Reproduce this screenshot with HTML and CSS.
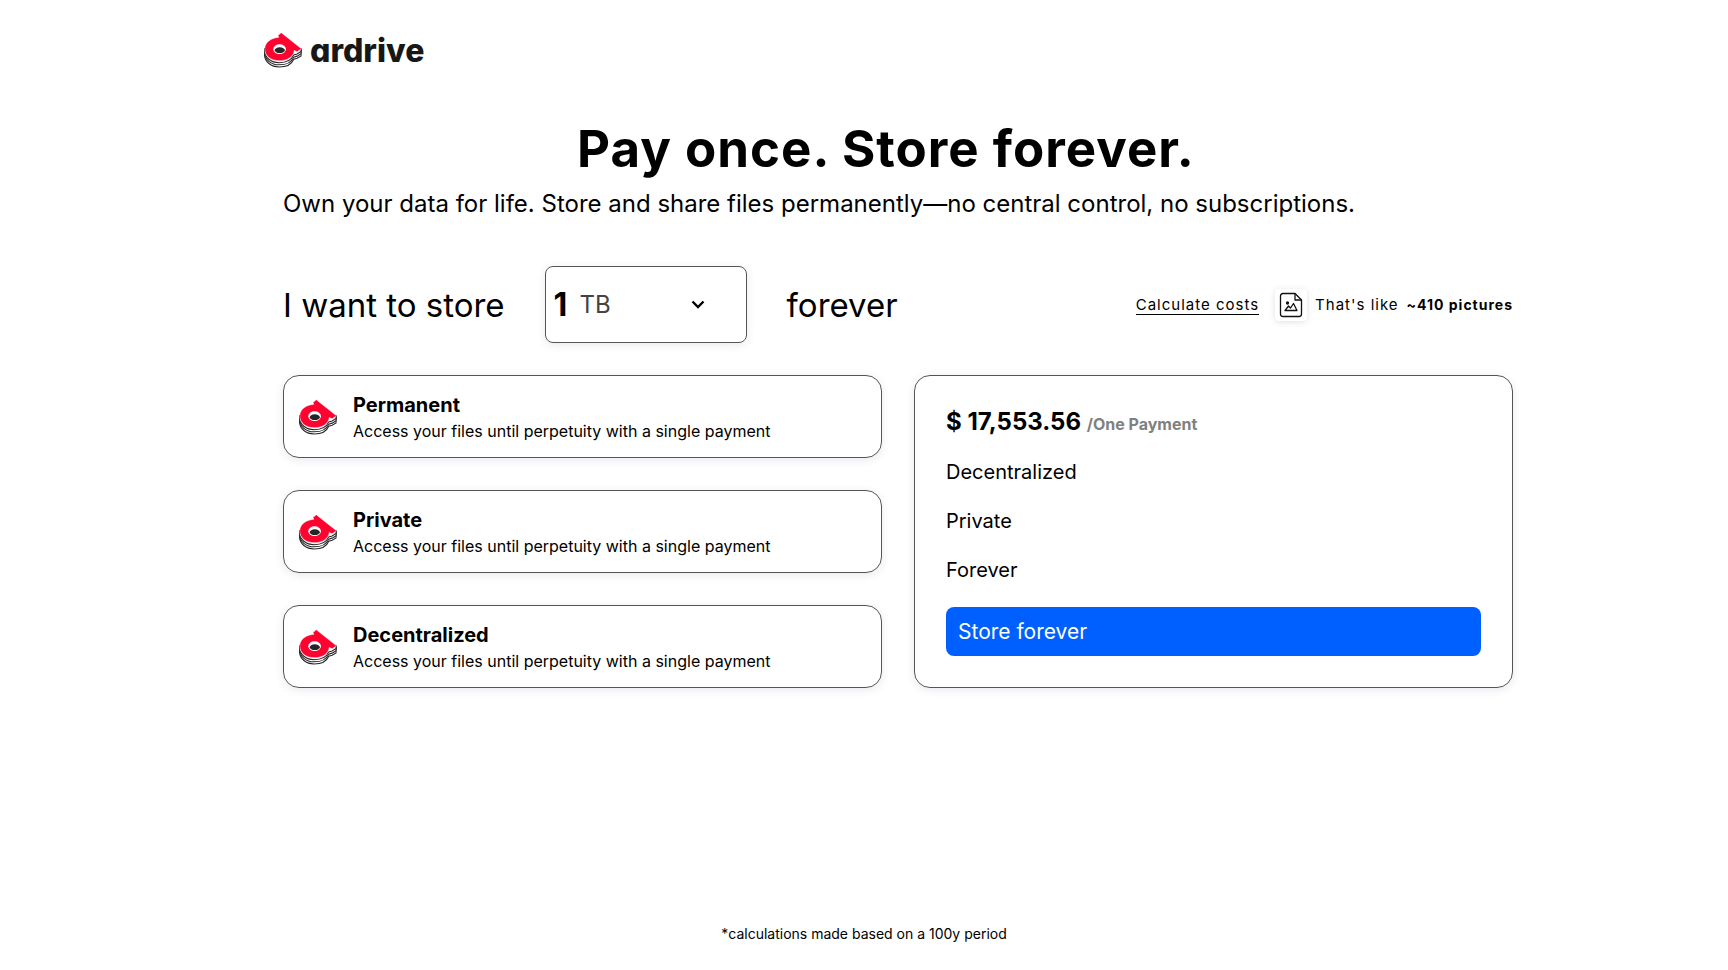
FILE: index.html
```html
<!DOCTYPE html>
<html lang="en">
<head>
    <meta charset="UTF-8">
    <meta name="viewport" content="width=device-width, initial-scale=1.0">
    <title>ArDrive Pricing</title>
    <link rel="stylesheet" href="styles.css">
</head>
<body>
    <svg class="sprite" aria-hidden="true">
        <symbol id="mark" viewBox="0 0 39 36">
            <g fill="#fff" stroke="#262626" stroke-width="1.100">
                <path d="M0.500 22C0.500 30.500 7.500 35.400 15.500 35.400C22.500 35.400 28.500 32.500 30.500 27.500L34 26.500L38 24V17H0.500Z"/>
                <path d="M0.500 20C0.500 28 7.500 33.200 15.500 33.200C22.500 33.200 28.500 30.300 30.500 25.300L34 24.300L38 21.800V17H0.500Z"/>
                <path d="M0.500 18C0.500 26 7.500 31 15.500 31C22.500 31 28.500 28 30.500 23L34 22L38 19.500V17H0.500Z"/>
            </g>
            <path fill="#fe0230" stroke="#fff" stroke-width="0.500" d="M15.200 5L14.300 3.200L17.700 0.200L38.500 16.800L34 19.800L31 18.400C30.500 24.600 24 29 16 29C7 29 0.800 24.300 0.800 16.700C0.800 10.500 7 5.600 15.200 5Z"/>
            <ellipse cx="16" cy="17.200" rx="6.500" ry="5" fill="#fff"/>
            <ellipse cx="16.200" cy="18.200" rx="5.200" ry="3" fill="#262626"/>
        </symbol>
    </svg>

    <header class="header">
        <a href="#" class="logo">
            <svg class="mark"><use href="#mark"/></svg>
            <span>ardrive</span>
        </a>
    </header>

    <main class="container">
        <h1>Pay once. Store forever.</h1>
        <p class="subtitle">Own your data for life. Store and share files permanently—no central control, no subscriptions.</p>

        <div class="calculator">
            <label for="amount">I want to store</label>
            <div class="size-box">
                <input type="text" id="amount" name="amount" value="1">
                <select id="unit" name="unit" aria-label="Unit">
                    <option>MB</option>
                    <option>GB</option>
                    <option selected>TB</option>
                </select>
                <svg class="chevron" viewBox="0 0 14 9"><path d="M1.500 1.500L7 7L12.500 1.500" fill="none" stroke="#000" stroke-width="2.400"/></svg>
            </div>
            <span>forever</span>
            <div class="costs">
                <a href="#">Calculate costs</a>
                <span class="file-icon">
                    <svg viewBox="0 0 24 26" fill="none" stroke="#111" stroke-width="1.300" stroke-linejoin="round">
                        <path d="M16 1.500H4Q1.500 1.500 1.500 4V22Q1.500 24.500 4 24.500H20Q22.500 24.500 22.500 22V8Z"/>
                        <path d="M16 1.500V8H22.500"/>
                        <path d="M6 18.500L9.500 14L11.500 16L14.500 11.500L18 18.500Z"/>
                        <circle cx="8.500" cy="11" r="1" fill="#111"/>
                    </svg>
                </span>
                <span>That's like</span>
                <strong>~410 pictures</strong>
            </div>
        </div>

        <div class="content">
            <div class="features">
                <div class="card feature">
                    <svg class="mark"><use href="#mark"/></svg>
                    <div>
                        <h2>Permanent</h2>
                        <p>Access your files until perpetuity with a single payment</p>
                    </div>
                </div>
                <div class="card feature">
                    <svg class="mark"><use href="#mark"/></svg>
                    <div>
                        <h2>Private</h2>
                        <p>Access your files until perpetuity with a single payment</p>
                    </div>
                </div>
                <div class="card feature">
                    <svg class="mark"><use href="#mark"/></svg>
                    <div>
                        <h2>Decentralized</h2>
                        <p>Access your files until perpetuity with a single payment</p>
                    </div>
                </div>
            </div>
            <div class="card price-card">
                <p class="price">$ 17,553.56 <span>/One Payment</span></p>
                <p>Decentralized</p>
                <p>Private</p>
                <p>Forever</p>
                <button type="button">Store forever</button>
            </div>
        </div>
    </main>

    <footer class="footer">*calculations made based on a 100y period</footer>
</body>
</html>
```
FILE: styles.css
```css
* {
    box-sizing: border-box;
}
body {
    font-family: Inter, sans-serif;
    background-color: #fff;
    color: #000;
    margin: 0;
    min-height: 100vh;
    display: flex;
    flex-direction: column;
}
h1, h2, p {
    margin: 0;
}
.sprite {
    display: none;
}
.mark {
    width: 38px;
    height: 36px;
    flex: none;
}
.header {
    width: 100%;
    max-width: 1200px;
    margin: 0 auto;
    padding: 32px 0;
}
.logo {
    display: inline-flex;
    align-items: center;
    gap: 8px;
    height: 36px;
    color: #171717;
    text-decoration: none;
    font-size: 32px;
    font-weight: 800;
    font-feature-settings: "cv11", "ss03";
}
.container {
    width: 100%;
    max-width: 1298px;
    margin: 0 auto;
    padding: 13px 0 0 68px;
}
h1 {
    font-size: 51px;
    line-height: 64px;
    letter-spacing: 1px;
    text-align: center;
    padding-right: 24px;
}
.subtitle {
    font-size: 24px;
    line-height: 32px;
    margin: 7px 0 46px;
}
.calculator {
    display: flex;
    align-items: center;
    gap: 40px;
    font-size: 33px;
}
.size-box {
    display: flex;
    align-items: center;
    position: relative;
    width: 202px;
    height: 77px;
    padding: 0 8px;
    border: 1px solid #555;
    border-radius: 8px;
    box-shadow: 0 2px 8px rgba(60, 70, 110, 0.12);
}
.size-box input {
    width: 26px;
    padding: 0;
    border: none;
    background: none;
    font: 700 32px Inter, sans-serif;
}
.size-box select {
    flex: 1;
    min-width: 0;
    padding: 0;
    border: none;
    background: none;
    appearance: none;
    color: #444;
    font: 400 24px Inter, sans-serif;
}
.chevron {
    position: absolute;
    right: 41px;
    width: 14px;
    height: 9px;
    pointer-events: none;
}
.costs {
    display: flex;
    align-items: center;
    gap: 8px;
    margin-left: auto;
    font-size: 15px;
    letter-spacing: 1px;
}
.costs a {
    color: #000;
    text-decoration: none;
    border-bottom: 1px solid #000;
    margin-right: 8px;
}
.costs strong {
    font-size: 14px;
}
.file-icon {
    display: flex;
    align-items: center;
    justify-content: center;
    width: 32px;
    height: 32px;
    border-radius: 4px;
    box-shadow: 0 1px 6px rgba(60, 70, 110, 0.16);
}
.file-icon svg {
    width: 24px;
    height: 26px;
}
.content {
    display: grid;
    grid-template-columns: 1fr 1fr;
    gap: 32px;
    margin-top: 32px;
}
.features {
    display: flex;
    flex-direction: column;
    gap: 32px;
}
.card {
    border: 1px solid #555;
    border-radius: 16px;
    box-shadow: 0 2px 8px rgba(60, 70, 110, 0.12);
}
.feature {
    display: flex;
    flex: 1;
    align-items: center;
    gap: 16px;
    padding: 14px 15px;
}
.feature h2 {
    font-size: 20px;
    line-height: 28px;
}
.feature p {
    font-size: 16px;
    line-height: 24px;
}
.price-card {
    display: flex;
    flex-direction: column;
    gap: 24px;
    padding: 31px;
    font-size: 20px;
    line-height: 25px;
}
.price {
    font-size: 24px;
    font-weight: 700;
    line-height: 29px;
}
.price span {
    color: #808080;
    font-size: 16px;
    line-height: 16px;
}
button {
    padding: 12px;
    border: none;
    border-radius: 8px;
    background-color: #0060ff;
    color: #fff;
    font: 400 21px/25px Inter, sans-serif;
    text-align: left;
    cursor: pointer;
}
.footer {
    margin-top: auto;
    padding-bottom: 24px;
    font-size: 14px;
    line-height: 24px;
    text-align: center;
}
```
